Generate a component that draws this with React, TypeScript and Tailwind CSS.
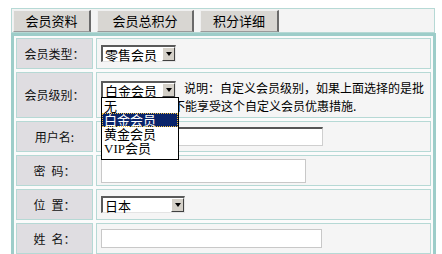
import type { ReactNode } from 'react';

const FONT = "font-['Noto_Sans_CJK_SC','Noto_Sans_CJK_JP',sans-serif]";

function Arrow() {
  return (
    <span className="flex w-[13px] items-center justify-center border-t border-l border-b border-r border-t-white border-l-white border-b-[#404040] border-r-[#404040] bg-[#d4d0c8]">
      <span className="h-0 w-0 border-l-[3px] border-r-[3px] border-t-[4px] border-l-transparent border-r-transparent border-t-black" />
    </span>
  );
}

function Select({ value, className }: { value: string; className: string }) {
  return (
    <span
      className={`inline-flex h-[17px] items-stretch border-t-2 border-l-2 border-b border-r border-t-[#5a5a5a] border-l-[#5a5a5a] border-b-[#e4e4e4] border-r-[#e4e4e4] bg-white align-middle ${className}`}
    >
      <span className="flex-1 pl-[2px] text-[13px] leading-[15px] text-black">{value}</span>
      <Arrow />
    </span>
  );
}

function Row({ label, h, children, top }: { label: string; h: string; children: ReactNode; top?: boolean }) {
  return (
    <div className={`flex gap-[3px] ${h}`}>
      <div className="flex w-[77px] items-center justify-center whitespace-pre border border-[#b6d9d5] bg-[#dfdde1] text-[12px] text-[#111]">
        {label}
      </div>
      <div
        className={`flex flex-1 border border-[#b6d9d5] bg-[#f5f5f5] pl-[4px] ${top ? 'items-start pt-[7px]' : 'items-center'}`}
      >
        {children}
      </div>
    </div>
  );
}

export default function App() {
  return (
    <div className={`relative h-[254px] w-[442px] overflow-hidden bg-white pl-[11px] pt-[8px] ${FONT}`}>
      {/* tabs */}
      <div className="flex h-[25px] w-[424px] gap-[6px] border border-[#b6d9d5] bg-[#f4f4f4] pl-[1px] pt-[1px]">
        {['会员资料', '会员总积分', '积分详细'].map((t, i) => (
          <div
            key={t}
            className={`flex h-[22px] items-center justify-center border-t border-l border-r-2 border-b border-t-[#f0f0f0] border-l-[#f0f0f0] border-r-[#6a6a6a] border-b-[#9a9a9a] bg-[#d8d6d2] text-[13px] text-black ${
              i === 0 ? 'w-[78px]' : i === 1 ? 'w-[97px]' : 'w-[79px]'
            }`}
          >
            {t}
          </div>
        ))}
      </div>

      {/* form */}
      <div className="flex w-[425px] flex-col gap-[3px] border-[3px] border-[#9dcdc9] bg-[#fbfbfb] p-[2px]">
        <Row label="会员类型：" h="h-[31px]">
          <Select value="零售会员" className="w-[75px]" />
        </Row>
        <Row label="会员级别：" h="h-[46px]" top>
          <div className="text-[12px] leading-[16px] text-black">
            <Select value="白金会员" className="mr-[8px] w-[75px]" />
            说明：自定义会员级别，如果上面选择的是批发会员，那么不能享受这个自定义会员优惠措施.
          </div>
        </Row>
        <Row label="用户名:" h="h-[31px]">
          <span className="h-[19px] w-[222px] border-t-2 border-l border-r border-b border-t-[#555] border-l-[#cfcfcf] border-r-[#cfcfcf] border-b-[#cfcfcf] bg-white" />
        </Row>
        <Row label={'密\u2002码：'} h="h-[31px]">
          <span className="h-[24px] w-[205px] border border-[#c8c8c8] bg-white" />
        </Row>
        <Row label={'位\u2002置：'} h="h-[31px]">
          <Select value="日本" className="w-[84px]" />
        </Row>
        <Row label={'姓\u2002名：'} h="h-[31px]">
          <span className="h-[19px] w-[221px] border border-[#c8c8c8] bg-white" />
        </Row>
      </div>

      {/* open dropdown list */}
      <div className="absolute left-[101px] top-[97px] w-[78px] border border-black bg-white pb-[3px] pt-[1px] text-[13px] leading-[14px] text-black">
        <div className="pl-[2px]">无</div>
        <div className="bg-[#0a246a] pl-[2px] text-white outline-1 outline-dotted outline-[#f0c040] -outline-offset-1">白金会员</div>
        <div className="pl-[2px]">黄金会员</div>
        <div className="pl-[2px] font-['Liberation_Serif','Noto_Sans_CJK_SC',serif]">
          VIP<span className={FONT}>会员</span>
        </div>
      </div>
    </div>
  );
}
